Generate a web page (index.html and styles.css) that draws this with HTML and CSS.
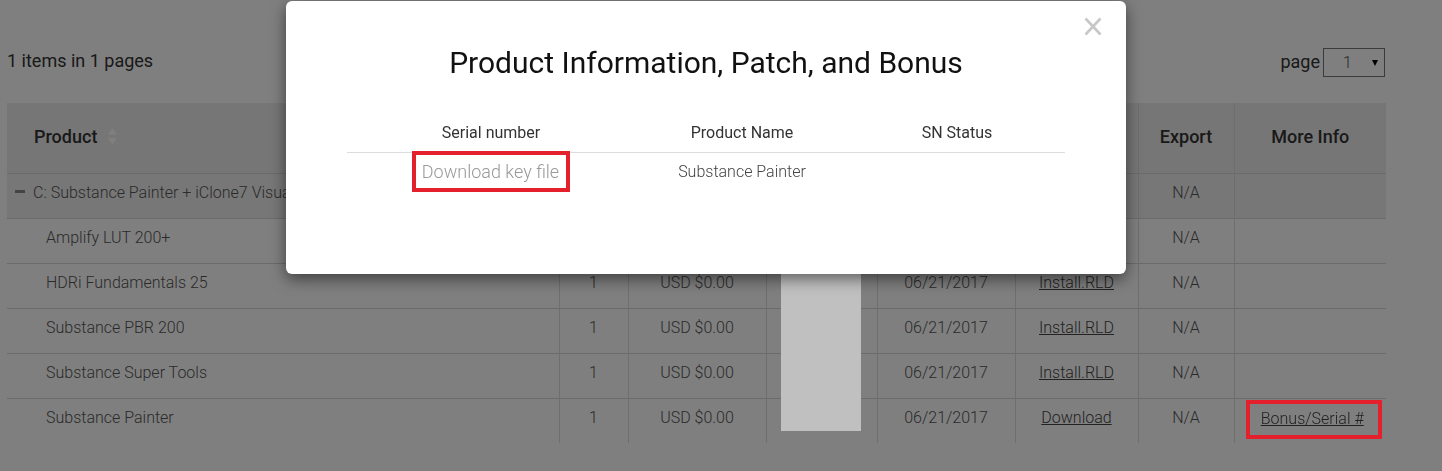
FILE: index.html
```html
<!DOCTYPE html>
<html lang="en">
<head>
<meta charset="utf-8">
<title>My Orders</title>
<link rel="stylesheet" href="styles.css">
</head>
<body>
<div class="page">
  <div class="infobar">
    <span class="count">1 items in 1 pages</span>
    <div class="pager">
      <span class="pager-label">page</span>
      <span class="select"><span class="select-val">1</span><span class="select-arrow"></span></span>
    </div>
  </div>

  <div class="table-wrap">
    <table class="orders">
      <colgroup>
        <col class="c-product"><col class="c-qty"><col class="c-price"><col class="c-sn"><col class="c-date"><col class="c-dl"><col class="c-export"><col class="c-more">
      </colgroup>
      <thead>
        <tr>
          <th class="th-product">Product<svg class="sort" width="9" height="17" viewBox="0 0 9 17"><polygon points="4.5,0 9,6.5 0,6.5" /><polygon points="0,10 9,10 4.5,16.5" /></svg></th>
          <th></th>
          <th></th>
          <th></th>
          <th></th>
          <th></th>
          <th>Export</th>
          <th>More Info</th>
        </tr>
      </thead>
      <tbody>
        <tr class="group">
          <td class="td-group"><span class="minus"></span>C: Substance Painter + iClone7 Visual Effects Bundle</td>
          <td></td>
          <td></td>
          <td></td>
          <td></td>
          <td></td>
          <td>N/A</td>
          <td></td>
        </tr>
        <tr>
          <td class="td-product">Amplify LUT 200+</td>
          <td></td>
          <td></td>
          <td></td>
          <td></td>
          <td></td>
          <td>N/A</td>
          <td></td>
        </tr>
        <tr>
          <td class="td-product">HDRi Fundamentals 25</td>
          <td>1</td>
          <td>USD $0.00</td>
          <td></td>
          <td>06/21/2017</td>
          <td><a class="link" href="#">Install.RLD</a></td>
          <td>N/A</td>
          <td></td>
        </tr>
        <tr>
          <td class="td-product">Substance PBR 200</td>
          <td>1</td>
          <td>USD $0.00</td>
          <td></td>
          <td>06/21/2017</td>
          <td><a class="link" href="#">Install.RLD</a></td>
          <td>N/A</td>
          <td></td>
        </tr>
        <tr>
          <td class="td-product">Substance Super Tools</td>
          <td>1</td>
          <td>USD $0.00</td>
          <td></td>
          <td>06/21/2017</td>
          <td><a class="link" href="#">Install.RLD</a></td>
          <td>N/A</td>
          <td></td>
        </tr>
        <tr>
          <td class="td-product">Substance Painter</td>
          <td>1</td>
          <td>USD $0.00</td>
          <td></td>
          <td>06/21/2017</td>
          <td><a class="link" href="#">Download</a></td>
          <td>N/A</td>
          <td class="td-mark"><span class="mark-bonus"><a class="link link-hi" href="#">Bonus/Serial #</a></span></td>
        </tr>
      </tbody>
    </table>
    <div class="redact"></div>
  </div>
</div>

<div class="backdrop"></div>

<div class="modal">
  <button class="close" aria-label="Close">
    <svg width="18" height="19" viewBox="0 0 18 19"><line x1="1.5" y1="1.5" x2="16.5" y2="17.5"/><line x1="16.5" y1="1.5" x2="1.5" y2="17.5"/></svg>
  </button>
  <h2 class="modal-title">Product Information, Patch, and Bonus</h2>
  <table class="sn-table">
    <colgroup><col class="sc-1"><col class="sc-2"><col class="sc-3"></colgroup>
    <thead>
      <tr><th>Serial number</th><th>Product Name</th><th>SN Status</th></tr>
    </thead>
    <tbody>
      <tr>
        <td><span class="mark-key">Download key file</span></td>
        <td class="sn-name">Substance Painter</td>
        <td></td>
      </tr>
    </tbody>
  </table>
</div>
</body>
</html>
```

FILE: styles.css
```css
html, body {
  margin: 0;
  padding: 0;
}

body {
  width: 1442px;
  height: 471px;
  overflow: hidden;
  background: #fff;
  font-family: Roboto, "Liberation Sans", Arial, sans-serif;
  color: #333;
}

.page {
  padding: 48px 56px 0 7px;
}

/* ---------- info bar ---------- */
.infobar {
  display: flex;
  justify-content: space-between;
  align-items: center;
  height: 29px;
  margin-bottom: 26px;
}

.count {
  font-size: 18px;
  color: #333;
  margin-top: -4px;
}

.pager {
  display: flex;
  align-items: center;
  gap: 3px;
  margin-right: 1px;
}

.pager-label {
  font-size: 18px;
  color: #333;
  margin-top: -2px;
}

.select {
  display: flex;
  align-items: center;
  box-sizing: border-box;
  width: 62px;
  height: 29px;
  border: 1px solid #777;
  padding-left: 19px;
}

.select-val {
  font-size: 16px;
  font-weight: 300;
  color: #555;
}

.select-arrow {
  margin-left: auto;
  margin-right: 6px;
  width: 0;
  height: 0;
  border-left: 3.5px solid transparent;
  border-right: 3.5px solid transparent;
  border-top: 6px solid #000;
}

/* ---------- orders table ---------- */
.table-wrap {
  position: relative;
}

.orders {
  width: 1379px;
  border-collapse: collapse;
  table-layout: fixed;
}

.c-product { width: 552px; }
.c-qty { width: 69px; }
.c-price { width: 138px; }
.c-sn { width: 111px; }
.c-date { width: 138px; }
.c-dl { width: 123px; }
.c-export { width: 96px; }
.c-more { width: 152px; }

.orders th {
  height: 66px;
  padding: 0 0 4px;
  background: #ececec;
  font-size: 18px;
  font-weight: 500;
  color: #333;
  text-align: center;
  border-left: 1px solid #dcdcdc;
}

.orders th.th-product {
  text-align: left;
  padding-left: 27px;
  border-left: none;
}

.sort {
  margin-left: 11px;
  vertical-align: -2px;
  fill: #ffffff;
}

.orders td {
  height: 37px;
  padding: 0 0 7px;
  text-align: center;
  font-size: 16px;
  font-weight: 300;
  color: #555;
  border-left: 1px solid #dcdcdc;
  border-top: 1px solid #d6d6d6;
  white-space: nowrap;
  overflow: hidden;
}

.orders td:first-child {
  border-left: none;
  text-align: left;
}

.orders .group td {
  background: #eeeeee;
}

.orders td.td-product {
  padding-left: 39px;
}

.orders td.td-group {
  padding-left: 8px;
}

.orders td.td-mark {
  padding-bottom: 4px;
}

.minus {
  display: inline-block;
  width: 10px;
  height: 3px;
  background: #888;
  margin-right: 8px;
  vertical-align: 5px;
}

.link {
  color: #444;
  text-decoration: underline;
}

.mark-bonus {
  position: relative;
  z-index: 20;
  display: inline-block;
  vertical-align: middle;
  border: 4px solid #e3202b;
  padding: 5px 14px 6px 11px;
  margin-left: 7px;
  line-height: 20px;
}

.link-hi {
  color: #222;
}

.redact {
  position: absolute;
  left: 774px;
  top: 170px;
  width: 80px;
  height: 158px;
  background: #c0c0c0;
  z-index: 20;
}

/* ---------- modal ---------- */
.backdrop {
  position: fixed;
  inset: 0;
  background: rgba(0, 0, 0, 0.5);
  z-index: 10;
}

.modal {
  position: fixed;
  top: 1px;
  left: 286px;
  width: 840px;
  height: 273px;
  box-sizing: border-box;
  padding: 44px 61px 0;
  background: #fff;
  border-radius: 6px;
  box-shadow: 0 5px 15px rgba(0, 0, 0, 0.5);
  z-index: 30;
}

.close {
  position: absolute;
  top: 16px;
  right: 24px;
  padding: 0;
  border: none;
  background: none;
  line-height: 0;
}

.close svg {
  stroke: #c8c8c8;
  stroke-width: 2.6;
}

.modal-title {
  margin: 0;
  text-align: center;
  font-size: 30px;
  font-weight: 400;
  line-height: 36px;
  color: #111;
}

.sn-table {
  width: 718px;
  margin-top: 32px;
  border-collapse: collapse;
  table-layout: fixed;
}

.sc-1 { width: 288px; }
.sc-2 { width: 214px; }
.sc-3 { width: 216px; }

.sn-table th {
  padding: 10px 0 9px;
  font-size: 16px;
  font-weight: 400;
  line-height: 20px;
  color: #333;
  border-bottom: 1px solid #dddddd;
}

.sn-table td {
  padding: 0;
  text-align: center;
  vertical-align: top;
}

.mark-key {
  display: inline-block;
  vertical-align: top;
  margin-top: -2px;
  border: 4px solid #e3202b;
  padding: 5px 7px 5px 6px;
  font-size: 18px;
  font-weight: 300;
  line-height: 23px;
  color: #999;
}

.sn-table td.sn-name {
  padding-top: 9px;
  font-size: 16px;
  font-weight: 300;
  line-height: 20px;
  color: #444;
}
```
